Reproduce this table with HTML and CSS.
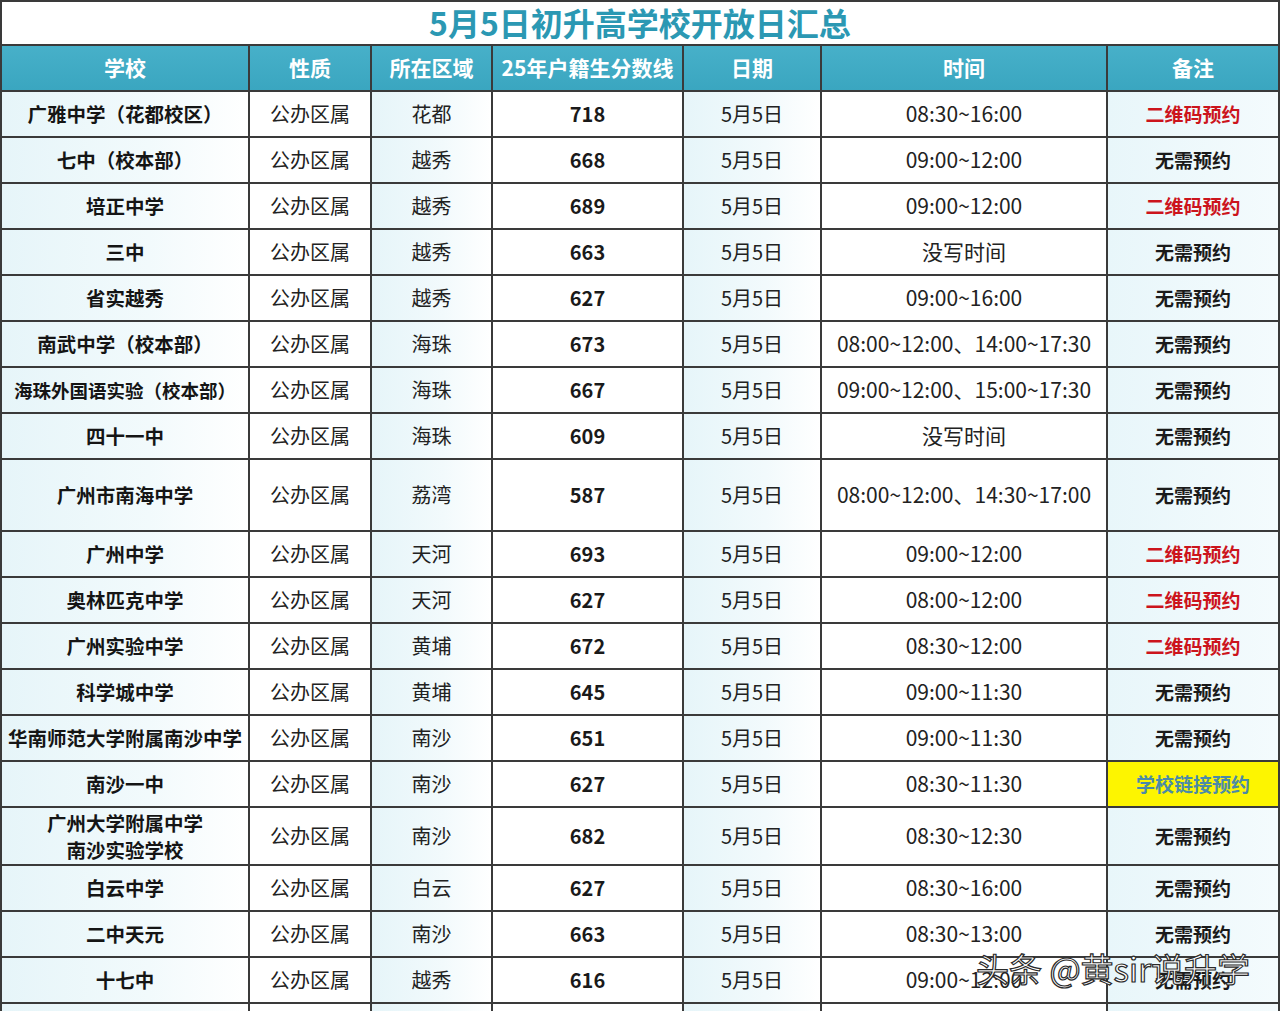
FILE: index.html
```html
<!DOCTYPE html>
<html lang="zh">
<head>
<meta charset="utf-8">
<title>5月5日初升高学校开放日汇总</title>
<link rel="stylesheet" href="styles.css">
</head>
<body>
<div class="sheet">
  <div class="title">5月5日初升高学校开放日汇总</div>
  <div class="row head">
    <div class="c">学校</div><div class="c">性质</div><div class="c">所在区域</div><div class="c">25年户籍生分数线</div><div class="c">日期</div><div class="c">时间</div><div class="c">备注</div>
  </div>
  <div class="row"><div class="c name">广雅中学（花都校区）</div><div class="c">公办区属</div><div class="c">花都</div><div class="c num">718</div><div class="c">5月5日</div><div class="c time">08:30~16:00</div><div class="c note red">二维码预约</div></div>
  <div class="row"><div class="c name">七中（校本部）</div><div class="c">公办区属</div><div class="c">越秀</div><div class="c num">668</div><div class="c">5月5日</div><div class="c time">09:00~12:00</div><div class="c note">无需预约</div></div>
  <div class="row"><div class="c name">培正中学</div><div class="c">公办区属</div><div class="c">越秀</div><div class="c num">689</div><div class="c">5月5日</div><div class="c time">09:00~12:00</div><div class="c note red">二维码预约</div></div>
  <div class="row"><div class="c name">三中</div><div class="c">公办区属</div><div class="c">越秀</div><div class="c num">663</div><div class="c">5月5日</div><div class="c time">没写时间</div><div class="c note">无需预约</div></div>
  <div class="row"><div class="c name">省实越秀</div><div class="c">公办区属</div><div class="c">越秀</div><div class="c num">627</div><div class="c">5月5日</div><div class="c time">09:00~16:00</div><div class="c note">无需预约</div></div>
  <div class="row"><div class="c name">南武中学（校本部）</div><div class="c">公办区属</div><div class="c">海珠</div><div class="c num">673</div><div class="c">5月5日</div><div class="c time">08:00~12:00、14:00~17:30</div><div class="c note">无需预约</div></div>
  <div class="row"><div class="c name small">海珠外国语实验（校本部）</div><div class="c">公办区属</div><div class="c">海珠</div><div class="c num">667</div><div class="c">5月5日</div><div class="c time">09:00~12:00、15:00~17:30</div><div class="c note">无需预约</div></div>
  <div class="row"><div class="c name">四十一中</div><div class="c">公办区属</div><div class="c">海珠</div><div class="c num">609</div><div class="c">5月5日</div><div class="c time">没写时间</div><div class="c note">无需预约</div></div>
  <div class="row tall"><div class="c name">广州市南海中学</div><div class="c">公办区属</div><div class="c">荔湾</div><div class="c num">587</div><div class="c">5月5日</div><div class="c time">08:00~12:00、14:30~17:00</div><div class="c note">无需预约</div></div>
  <div class="row"><div class="c name">广州中学</div><div class="c">公办区属</div><div class="c">天河</div><div class="c num">693</div><div class="c">5月5日</div><div class="c time">09:00~12:00</div><div class="c note red">二维码预约</div></div>
  <div class="row"><div class="c name">奥林匹克中学</div><div class="c">公办区属</div><div class="c">天河</div><div class="c num">627</div><div class="c">5月5日</div><div class="c time">08:00~12:00</div><div class="c note red">二维码预约</div></div>
  <div class="row"><div class="c name">广州实验中学</div><div class="c">公办区属</div><div class="c">黄埔</div><div class="c num">672</div><div class="c">5月5日</div><div class="c time">08:30~12:00</div><div class="c note red">二维码预约</div></div>
  <div class="row"><div class="c name">科学城中学</div><div class="c">公办区属</div><div class="c">黄埔</div><div class="c num">645</div><div class="c">5月5日</div><div class="c time">09:00~11:30</div><div class="c note">无需预约</div></div>
  <div class="row"><div class="c name">华南师范大学附属南沙中学</div><div class="c">公办区属</div><div class="c">南沙</div><div class="c num">651</div><div class="c">5月5日</div><div class="c time">09:00~11:30</div><div class="c note">无需预约</div></div>
  <div class="row"><div class="c name">南沙一中</div><div class="c">公办区属</div><div class="c">南沙</div><div class="c num">627</div><div class="c">5月5日</div><div class="c time">08:30~11:30</div><div class="c note link">学校链接预约</div></div>
  <div class="row mid"><div class="c name two">广州大学附属中学<br>南沙实验学校</div><div class="c">公办区属</div><div class="c">南沙</div><div class="c num">682</div><div class="c">5月5日</div><div class="c time">08:30~12:30</div><div class="c note">无需预约</div></div>
  <div class="row"><div class="c name">白云中学</div><div class="c">公办区属</div><div class="c">白云</div><div class="c num">627</div><div class="c">5月5日</div><div class="c time">08:30~16:00</div><div class="c note">无需预约</div></div>
  <div class="row"><div class="c name">二中天元</div><div class="c">公办区属</div><div class="c">南沙</div><div class="c num">663</div><div class="c">5月5日</div><div class="c time">08:30~13:00</div><div class="c note">无需预约</div></div>
  <div class="row"><div class="c name">十七中</div><div class="c">公办区属</div><div class="c">越秀</div><div class="c num">616</div><div class="c">5月5日</div><div class="c time">09:00~12:00</div><div class="c note">无需预约</div></div>
  <div class="row"><div class="c name"></div><div class="c"></div><div class="c"></div><div class="c"></div><div class="c"></div><div class="c"></div><div class="c note"></div></div>
  <div class="watermark">头条 @黄sir说升学</div>
</div>
</body>
</html>
```
FILE: styles.css
```css
html, body {
  margin: 0;
  padding: 0;
  background: #ffffff;
}
body {
  font-family: "Noto Sans CJK SC", "Noto Sans", sans-serif;
  color: #1c1c1c;
  overflow: hidden;
  height: 1011px;
}
.sheet {
  position: relative;
  width: 1280px;
  box-sizing: border-box;
  border-top: 2px solid #3a3a3a;
  border-left: 2px solid #3a3a3a;
  border-right: 2px solid #3a3a3a;
}
.title {
  height: 44px;
  box-sizing: border-box;
  border-bottom: 2px solid #3a3a3a;
  display: flex;
  align-items: center;
  justify-content: center;
  font-size: 32px;
  font-weight: 700;
  color: #2b98b3;
  line-height: 1;
  padding-bottom: 2px;
}
.row {
  display: grid;
  grid-template-columns: 248px 122px 121px 191px 138px 286px 170px;
  height: 46px;
  box-sizing: border-box;
  border-bottom: 2px solid #3a3a3a;
}
.row.tall { height: 72px; }
.row.mid { height: 58px; }
.c {
  box-sizing: border-box;
  border-right: 2px solid #3a3a3a;
  display: flex;
  align-items: center;
  justify-content: center;
  text-align: center;
  font-size: 20px;
  line-height: 1.2;
  color: #222;
  white-space: nowrap;
}
.c:last-child { border-right: none; }
.row > .c:nth-child(odd) {
  background: linear-gradient(90deg, #e6f5f9 0%, #f2fafc 60%, #ffffff 100%);
}
.row > .c:nth-child(7) {
  background: linear-gradient(90deg, #e8f6fa 0%, #f4fbfd 100%);
}
.row.head {
  background: #3eaac4;
}
.row.head > .c {
  background: linear-gradient(180deg, #47b0c9 0%, #3aa6c0 100%);
  color: #ffffff;
  font-weight: 700;
  font-size: 21px;
}
.name {
  font-weight: 700;
  color: #151515;
  font-size: 19.5px;
}
.name.small { font-size: 18.5px; }
.name.two { line-height: 1.4; }
.num {
  font-weight: 700;
  color: #1a1a1a;
}
.time {
  font-size: 21px;
}
.note {
  font-weight: 700;
  color: #1a1a1a;
  font-size: 19px;
}
.note.red { color: #cc141c; }
.row > .c.link {
  background: #fdf500;
  color: #4b8aa8;
}
.watermark {
  position: absolute;
  left: 974px;
  top: 942px;
  font-size: 33px;
  font-weight: 400;
  color: #ffffff;
  -webkit-text-stroke: 1.2px #2a2a2a;
  white-space: nowrap;
}
```
